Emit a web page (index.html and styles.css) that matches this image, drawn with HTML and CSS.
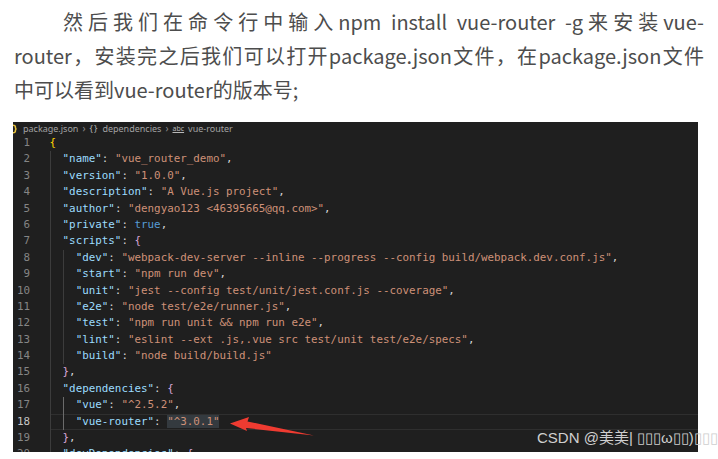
FILE: index.html
```html
<!DOCTYPE html>
<html lang="zh-CN">
<head>
<meta charset="utf-8">
<title>vue-router</title>
<link rel="stylesheet" href="styles.css">
</head>
<body>
<p class="para"><span class="jline first">然后我们在命令行中输入npm install vue-router -g来安装vue-</span><span class="jline">router，安装完之后我们可以打开package.json文件，在package.json文件</span><span class="tline">中可以看到vue-router的版本号;</span></p>

<div class="shot">
  <div class="crumbs">
    <svg class="jsonicon" width="4" height="10" viewBox="0 0 4 10"><path d="M0 1.2 Q2.6 1.2 2.4 3.6 Q2.4 5 3.6 5 Q2.4 5 2.4 6.4 Q2.6 8.8 0 8.8" fill="none" stroke="#e8c33c" stroke-width="1.6"/></svg>
    <span class="crumb">package.json</span>
    <span class="sep">›</span>
    <span class="cicon">{}</span>
    <span class="crumb">dependencies</span>
    <span class="sep">›</span>
    <span class="abc">abc</span>
    <span class="crumb">vue-router</span>
  </div>
  <div class="code">
    <div class="ln"><span class="num">1</span><span class="src"><span class="b1">{</span></span></div>
    <div class="ln"><span class="num">2</span><span class="src"><i class="g"></i><span class="k">"name"</span><span class="p">: </span><span class="s">"vue_router_demo"</span><span class="p">,</span></span></div>
    <div class="ln"><span class="num">3</span><span class="src"><i class="g"></i><span class="k">"version"</span><span class="p">: </span><span class="s">"1.0.0"</span><span class="p">,</span></span></div>
    <div class="ln"><span class="num">4</span><span class="src"><i class="g"></i><span class="k">"description"</span><span class="p">: </span><span class="s">"A Vue.js project"</span><span class="p">,</span></span></div>
    <div class="ln"><span class="num">5</span><span class="src"><i class="g"></i><span class="k">"author"</span><span class="p">: </span><span class="s">"dengyao123 &lt;46395665@qq.com&gt;"</span><span class="p">,</span></span></div>
    <div class="ln"><span class="num">6</span><span class="src"><i class="g"></i><span class="k">"private"</span><span class="p">: </span><span class="kw">true</span><span class="p">,</span></span></div>
    <div class="ln"><span class="num">7</span><span class="src"><i class="g"></i><span class="k">"scripts"</span><span class="p">: </span><span class="b2">{</span></span></div>
    <div class="ln"><span class="num">8</span><span class="src"><i class="g"></i><i class="g"></i><span class="k">"dev"</span><span class="p">: </span><span class="s">"webpack-dev-server --inline --progress --config build/webpack.dev.conf.js"</span><span class="p">,</span></span></div>
    <div class="ln"><span class="num">9</span><span class="src"><i class="g"></i><i class="g"></i><span class="k">"start"</span><span class="p">: </span><span class="s">"npm run dev"</span><span class="p">,</span></span></div>
    <div class="ln"><span class="num">10</span><span class="src"><i class="g"></i><i class="g"></i><span class="k">"unit"</span><span class="p">: </span><span class="s">"jest --config test/unit/jest.conf.js --coverage"</span><span class="p">,</span></span></div>
    <div class="ln"><span class="num">11</span><span class="src"><i class="g"></i><i class="g"></i><span class="k">"e2e"</span><span class="p">: </span><span class="s">"node test/e2e/runner.js"</span><span class="p">,</span></span></div>
    <div class="ln"><span class="num">12</span><span class="src"><i class="g"></i><i class="g"></i><span class="k">"test"</span><span class="p">: </span><span class="s">"npm run unit &amp;&amp; npm run e2e"</span><span class="p">,</span></span></div>
    <div class="ln"><span class="num">13</span><span class="src"><i class="g"></i><i class="g"></i><span class="k">"lint"</span><span class="p">: </span><span class="s">"eslint --ext .js,.vue src test/unit test/e2e/specs"</span><span class="p">,</span></span></div>
    <div class="ln"><span class="num">14</span><span class="src"><i class="g"></i><i class="g"></i><span class="k">"build"</span><span class="p">: </span><span class="s">"node build/build.js"</span></span></div>
    <div class="ln"><span class="num">15</span><span class="src"><i class="g"></i><span class="b2">}</span><span class="p">,</span></span></div>
    <div class="ln"><span class="num">16</span><span class="src"><i class="g"></i><span class="k">"dependencies"</span><span class="p">: </span><span class="b2">{</span></span></div>
    <div class="ln"><span class="num">17</span><span class="src"><i class="g"></i><i class="g active"></i><span class="k">"vue"</span><span class="p">: </span><span class="s">"^2.5.2"</span><span class="p">,</span></span></div>
    <div class="ln cur"><span class="num">18</span><span class="src"><i class="g"></i><i class="g active"></i><span class="k">"vue-router"</span><span class="p">: </span><span class="s hl">"^3.0.1"</span></span></div>
    <div class="ln"><span class="num">19</span><span class="src"><i class="g"></i><span class="b2">}</span><span class="p">,</span></span></div>
    <div class="ln"><span class="num">20</span><span class="src"><i class="g"></i><span class="k">"devDependencies"</span><span class="p">: </span><span class="b2">{</span></span></div>
  </div>
  <svg class="arrow" width="90" height="26" viewBox="0 0 90 26"><polygon points="0,7.5 19,1 17.5,5.5 84,19.5 16,12 17,15" fill="#ef3b31"/></svg>
  <div class="mark">CSDN @美美| ▯▯▯ω▯▯)▯▯▯</div>
</div>
</body>
</html>
```

FILE: styles.css
```css
html, body {
  margin: 0;
  padding: 0;
  background: #ffffff;
}

.para {
  margin: 5px 0 0 14px;
  width: 690px;
  font-family: "Noto Sans CJK SC", "Noto Sans", sans-serif;
  font-size: 20px;
  line-height: 34px;
  color: #4d4d4d;
}

.jline {
  display: block;
  text-align: justify;
  text-align-last: justify;
}

.jline.first {
  text-indent: 49px;
}

.tline {
  display: block;
}

.shot {
  position: relative;
  margin: 15px 0 0 13px;
  width: 685px;
  height: 330px;
  background: #1f1f1f;
  overflow: visible;
}

.crumbs {
  height: 13px;
  display: flex;
  align-items: center;
  gap: 4px;
  font-family: "Noto Sans", sans-serif;
  font-size: 9px;
  line-height: 11px;
  color: #a3a3a3;
  white-space: nowrap;
  overflow: hidden;
}

.jsonicon {
  display: block;
  margin-right: 2px;
}

.sep {
  color: #8a8a8a;
  font-size: 10px;
}

.cicon {
  color: #b0b0b0;
  letter-spacing: 1px;
}

.abc {
  font-size: 7px;
  color: #b8b8b8;
  text-decoration: underline;
}

.code {
  height: 317px;
  overflow: hidden;
  font-family: "DejaVu Sans Mono", monospace;
  font-size: 10.86px;
}

.ln {
  display: flex;
  height: 16.4px;
  line-height: 16.4px;
}

.num {
  width: 17px;
  flex: none;
  text-align: right;
  color: #858585;
}

.src {
  flex: 1;
  margin-left: 19.5px;
  white-space: pre;
  color: #d4d4d4;
}

.cur .num {
  color: #c6c6c6;
}

.cur .src {
  box-shadow: inset 0 1px #2f2f2f, inset 0 -1px #2f2f2f;
}

.g {
  display: inline-block;
  box-sizing: border-box;
  width: 2ch;
  height: 16.4px;
  vertical-align: top;
  border-left: 1px solid #3c3c3c;
}

.g.active {
  border-left-color: #6b6b6b;
}

.k { color: #9cdcfe; }
.s { color: #ce9178; }
.p { color: #d4d4d4; }
.kw { color: #569cd6; }
.b1 { color: #ffd700; }
.b2 { color: #d8a6d8; }

.hl {
  background: #343a3f;
}

.arrow {
  position: absolute;
  left: 217px;
  top: 294px;
}

.mark {
  position: absolute;
  left: 524px;
  top: 307px;
  font-family: "Liberation Sans", "Noto Sans CJK SC", sans-serif;
  font-size: 15px;
  line-height: 18px;
  color: #cfcfcf;
  white-space: nowrap;
}
```
